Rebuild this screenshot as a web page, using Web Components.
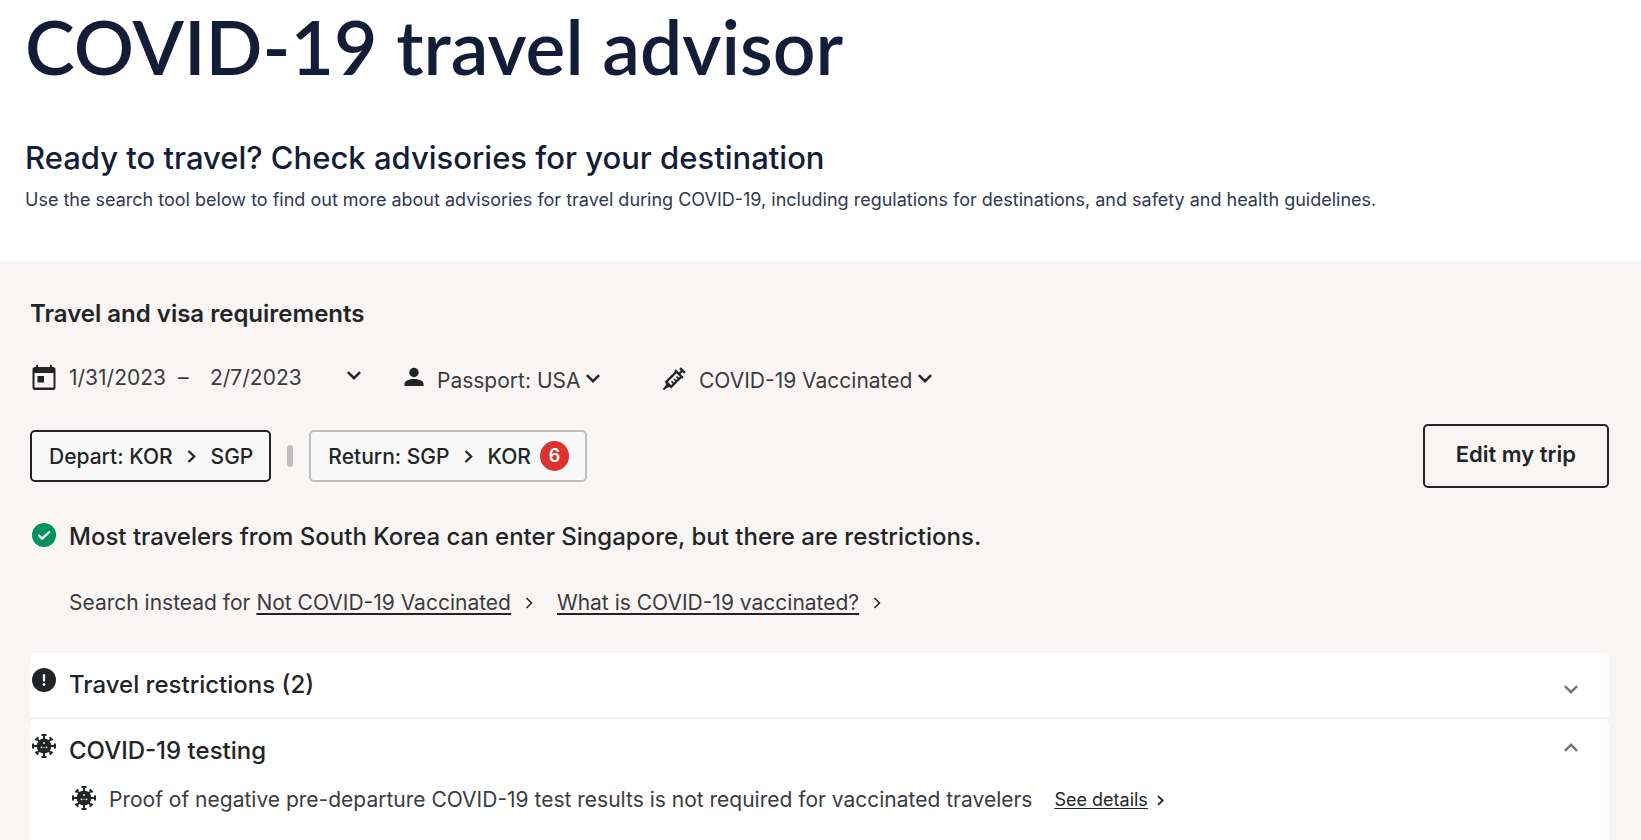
<!DOCTYPE html>
<html lang="en">
<head>
<meta charset="utf-8">
<meta name="viewport" content="width=device-width, initial-scale=1">
<title>COVID-19 travel advisor</title>
<style>
  body { margin: 0; background: #fff; color: #222526; font-family: Inter, "Open Sans", sans-serif; }
</style>
</head>
<body>
<travel-page>
  <advisor-header slot="header">
    <span slot="title">COVID-19 travel advisor</span>
    <span slot="subtitle">Ready to travel? Check advisories for your destination</span>
    Use the search tool below to find out more about advisories for travel during COVID-19, including regulations for destinations, and safety and health guidelines.
  </advisor-header>
  <requirements-panel>
    <span slot="title">Travel and visa requirements</span>
    <trip-filters slot="filters">
      <date-range from="1/31/2023" to="2/7/2023"></date-range>
      <filter-select icon="person" label="Passport" value="Passport: USA"></filter-select>
      <filter-select icon="syringe" label="Vaccination status" value="COVID-19 Vaccinated"></filter-select>
    </trip-filters>
    <trip-legs slot="legs">
      <trip-leg from="Depart: KOR" to="SGP" selected></trip-leg>
      <trip-leg from="Return: SGP" to="KOR" count="6"></trip-leg>
      <span slot="action">Edit my trip</span>
    </trip-legs>
    <entry-status slot="status">
      <span slot="summary">Most travelers from South Korea can enter Singapore, but there are restrictions.</span>
      Search instead for&nbsp;<detail-link>Not COVID-19 Vaccinated</detail-link><detail-link>What is COVID-19 vaccinated?</detail-link>
    </entry-status>
    <advice-section icon="alert">
      <span slot="title">Travel restrictions (2)</span>
    </advice-section>
    <advice-section icon="virus" open>
      <span slot="title">COVID-19 testing</span>
      <advice-item icon="virus">Proof of negative pre-departure COVID-19 test results is not required for vaccinated travelers<detail-link slot="link" small>See details</detail-link></advice-item>
    </advice-section>
  </requirements-panel>
</travel-page>

<script>
const spokes = [0, 45, 90, 135, 180, 225, 270, 315].map(a =>
  `<path transform="rotate(${a} 12 12)" d="${a % 90 ? 'M12 7V1.8M10 1.8h4' : 'M12 7V1M9.5 1h5'}"/>`).join('');

const ICONS = {
  calendar: ['0 0 24 26', `<path fill="currentColor" fill-rule="evenodd" d="M4 1h2v2h12V1h2v2h1a2.5 2.5 0 0 1 2.500 2.500V23.500A2.500 2.500 0 0 1 21 26H3A2.500 2.500 0 0 1 .500 23.500V5.500A2.500 2.500 0 0 1 3 3h1zM2.500 9v14.500h19V9zM5.500 12h6.500v6.500H5.500z"/>`],
  person: ['0 0 20 20', `<circle cx="10" cy="5.500" r="4.700" fill="currentColor"/><path fill="currentColor" d="M.500 19v-2.200C.500 13.500 5.500 12 10 12s9.500 1.500 9.500 4.800V19z"/>`],
  syringe: ['0 0 24 24', `<g transform="translate(12 12) rotate(-45)" fill="none" stroke="currentColor"><path stroke-width="2" d="M-15 0h4"/><path fill="currentColor" stroke="none" d="M-12-1.500h2l2-2v7l-2-2h-2z"/><path stroke-width="2.300" d="M-7.500-3.500H7v7H-7.500zM7-5.500V5.500M7 0h5"/><path stroke-width="2.500" d="M12-3.500v7"/><path stroke-width="1.700" d="M-3.500 3.500V0M0 3.500V0M3.500 3.500V0"/></g>`],
  check: ['0 0 24 24', `<circle cx="12" cy="12" r="12" fill="#00915f"/><path fill="none" stroke="#fff" stroke-width="2.300" stroke-linecap="round" stroke-linejoin="round" d="M7 12.500l3.200 3.200L17.200 9"/>`],
  alert: ['0 0 24 24', `<circle cx="12" cy="12" r="12" fill="currentColor"/><path stroke="#fff" stroke-width="2.300" stroke-linecap="round" d="M12 7.200v5.300"/><circle cx="12" cy="16.600" r="1.400" fill="#fff"/>`],
  virus: ['0 0 24 24', `<circle cx="12" cy="12" r="7.400" fill="currentColor"/><g fill="none" stroke="currentColor" stroke-width="2">${spokes}</g><g fill="#fff"><circle cx="12" cy="9" r=".900"/><circle cx="9.500" cy="13.300" r=".900"/><circle cx="14.500" cy="13.300" r=".900"/><circle cx="12" cy="13.300" r=".600"/></g>`],
  down: ['0 0 14 9', `<path fill="none" stroke="currentColor" stroke-width="2.500" d="M.900 1.200L7 7.200l6.100-6"/>`],
  up: ['0 0 14 9', `<path fill="none" stroke="currentColor" stroke-width="2.500" d="M.900 7.800L7 1.800l6.100 6"/>`],
  right: ['0 0 8 12', `<path fill="none" stroke="currentColor" stroke-width="2.100" d="M1.200.900L6.500 6l-5.300 5.100"/>`],
  thin: ['0 0 8 12', `<path fill="none" stroke="currentColor" stroke-width="1.500" d="M1.500 1L6.500 6l-5 5"/>`]
};

const icon = (name, w, h = w) =>
  `<svg width="${w}" height="${h}" viewBox="${ICONS[name][0]}" aria-hidden="true">${ICONS[name][1]}</svg>`;

const RESET = `<style>
  * { box-sizing: border-box; }
  svg { display: block; flex: none; }
  h1, h2, h3, p { margin: 0; }
  button, input, select { font: inherit; color: inherit; background: none; border: 0; padding: 0; margin: 0; border-radius: 0; }
  button { cursor: pointer; }
</style>`;

const define = (name, render) => customElements.define(name, class extends HTMLElement {
  constructor() {
    super();
    this.attachShadow({ mode: 'open' }).innerHTML = RESET + render(this);
  }
});

define('travel-page', () => `
  <style>:host { display: flex; flex-direction: column; min-height: 100vh; }</style>
  <slot name="header"></slot><slot></slot>`);

define('advisor-header', () => `
  <style>
    :host { display: block; padding: 0 25px 47px; color: #141d38; }
    h1 { font: 600 75px/92px Lato, sans-serif; }
    h2 { margin-top: 46px; font-size: 31px; font-weight: 500; line-height: 40px; }
    p { margin-top: 8px; font-size: 18px; line-height: 28px; color: #2f3850; }
  </style>
  <h1><slot name="title"></slot></h1>
  <h2><slot name="subtitle"></slot></h2>
  <p><slot></slot></p>`);

define('requirements-panel', () => `
  <style>
    :host { flex: 1; display: flex; flex-direction: column; padding: 37px 32px 0 30px; background: #f9f5f4; }
    h3 { font-size: 24px; font-weight: 600; line-height: 32px; }
    .sections { flex: 1; display: flex; flex-direction: column; gap: 2px; margin-top: 36px; background: #f1f1f1; border-radius: 5px 5px 0 0; }
  </style>
  <h3><slot name="title"></slot></h3>
  <slot name="filters"></slot>
  <slot name="legs"></slot>
  <slot name="status"></slot>
  <div class="sections"><slot></slot></div>`);

define('trip-filters', () => `
  <style>:host { display: flex; flex-wrap: wrap; margin-top: 34px; font-size: 21px; line-height: 28px; color: #3a3c3e; }</style>
  <slot></slot>`);

define('date-range', el => `
  <style>
    :host { display: flex; align-items: flex-start; width: 372px; padding-left: 2px; }
    svg { color: #222526; }
    input { height: 28px; width: 98px; }
    .from { margin-left: 13px; }
    .dash { width: 43px; padding-left: 11px; }
    button { margin: 7px 0 0 39px; }
  </style>
  ${icon('calendar', 24, 26)}
  <input class="from" aria-label="Start date" value="${el.getAttribute('from')}">
  <span class="dash">–</span>
  <input aria-label="End date" value="${el.getAttribute('to')}">
  <button aria-label="Choose dates">${icon('down', 14, 9)}</button>`);

define('filter-select', el => `
  <style>
    :host { display: flex; padding-top: 3px; margin-right: 62px; }
    label { display: flex; align-items: flex-start; }
    select { appearance: none; height: 28px; line-height: 28px; margin: 0 5px 0 13px; }
    svg { color: #222526; margin-top: 7px; }
    svg:first-child { margin-top: 0; }
  </style>
  <label>${icon(el.getAttribute('icon'), el.getAttribute('icon') === 'person' ? 20 : 24)}
    <select aria-label="${el.getAttribute('label')}"><option>${el.getAttribute('value')}</option></select>
    ${icon('down', 14, 9)}</label>`);

define('trip-legs', () => `
  <style>
    :host { display: flex; align-items: center; justify-content: space-between; margin-top: 29px; }
    .legs { display: flex; align-items: center; }
    .edit { height: 64px; padding: 0 31px 4px; border: 2px solid #222526; border-radius: 5px; font-size: 22px; font-weight: 600; }
  </style>
  <div class="legs"><slot></slot></div>
  <button class="edit"><slot name="action"></slot></button>`);

define('trip-leg', el => `
  <style>
    :host { display: flex; align-items: center; }
    :host(:not([selected]))::before { content: ""; width: 6px; height: 22px; margin: 0 16px; border-radius: 3px; background: #bdbdbd; }
    button { display: flex; align-items: center; height: 52px; padding: 0 16px 0 17px; border: 2px solid #bdbdbd; border-radius: 5px; background: #f9f9f9; font-size: 21px; font-weight: 500; }
    :host([selected]) button { border-color: #222526; }
    svg { margin: 0 15px 0 14px; }
    .count { width: 29px; height: 30px; margin-left: 9px; border-radius: 50%; background: #e03131; color: #fff; font-size: 18px; font-weight: 600; line-height: 30px; }
  </style>
  <button aria-pressed="${el.hasAttribute('selected')}">${el.getAttribute('from')}${icon('right', 9, 13)}${el.getAttribute('to')}
    ${el.hasAttribute('count') ? `<span class="count">${el.getAttribute('count')}</span>` : ''}</button>`);

define('entry-status', () => `
  <style>
    :host { display: grid; grid-template-columns: 24px 1fr; column-gap: 13px; padding-left: 2px; margin-top: 33px; }
    svg { margin-top: 2px; }
    .summary { font-size: 24px; font-weight: 500; line-height: 32px; }
    .more { grid-column: 2; margin-top: 36px; font-size: 21px; line-height: 28px; color: #3a3c3e; }
  </style>
  ${icon('check', 24)}
  <p class="summary"><slot name="summary"></slot></p>
  <p class="more"><slot></slot></p>`);

define('detail-link', el => `
  <style>
    :host { display: inline-flex; align-items: center; margin-right: 24px; color: #222526; }
    a { color: #3a3c3e; text-decoration: underline 2px #222526; text-underline-offset: 3px; text-decoration-skip-ink: none; }
    svg { margin-left: 14px; }
    :host([small]) { margin-right: 0; font-size: 18px; }
    :host([small]) a { color: #222526; text-decoration-thickness: 1px; text-underline-offset: 2px; }
    :host([small]) svg { margin-left: 9px; }
  </style>
  <a href="#"><slot></slot></a>${el.hasAttribute('small') ? icon('right', 7, 11) : icon('thin', 8, 12)}`);

define('advice-section', el => {
  const open = el.hasAttribute('open');
  return `
  <style>
    :host { display: block; background: #fff; border-radius: 5px 5px 0 0; }
    :host([open]) { flex: 1; padding-bottom: 24px; }
    .head { display: flex; align-items: flex-start; width: 100%; height: 64px; padding: 15px 31px 0 2px; text-align: left; }
    :host([open]) .head { height: 62px; }
    .title { flex: 1; margin-left: 13px; font-size: 24px; font-weight: 500; line-height: 34px; }
    .arrow { color: #757575; padding-top: 17px; }
    :host([open]) .arrow { padding-top: 9px; }
  </style>
  <button class="head" aria-expanded="${open}">${icon(el.getAttribute('icon'), 24)}
    <span class="title"><slot name="title"></slot></span>
    <span class="arrow">${icon(open ? 'up' : 'down', 14, 9)}</span></button>
  <slot></slot>`;
});

define('advice-item', el => `
  <style>
    :host { display: flex; align-items: center; padding-left: 42px; font-size: 21px; line-height: 28px; color: #3a3c3e; }
    svg { color: #222526; }
    p { margin: 4px 22px 0 13px; }
    ::slotted(detail-link) { margin-top: 5px; }
  </style>
  ${icon(el.getAttribute('icon'), 24)}<p><slot></slot></p><slot name="link"></slot>`);
</script>
</body>
</html>
